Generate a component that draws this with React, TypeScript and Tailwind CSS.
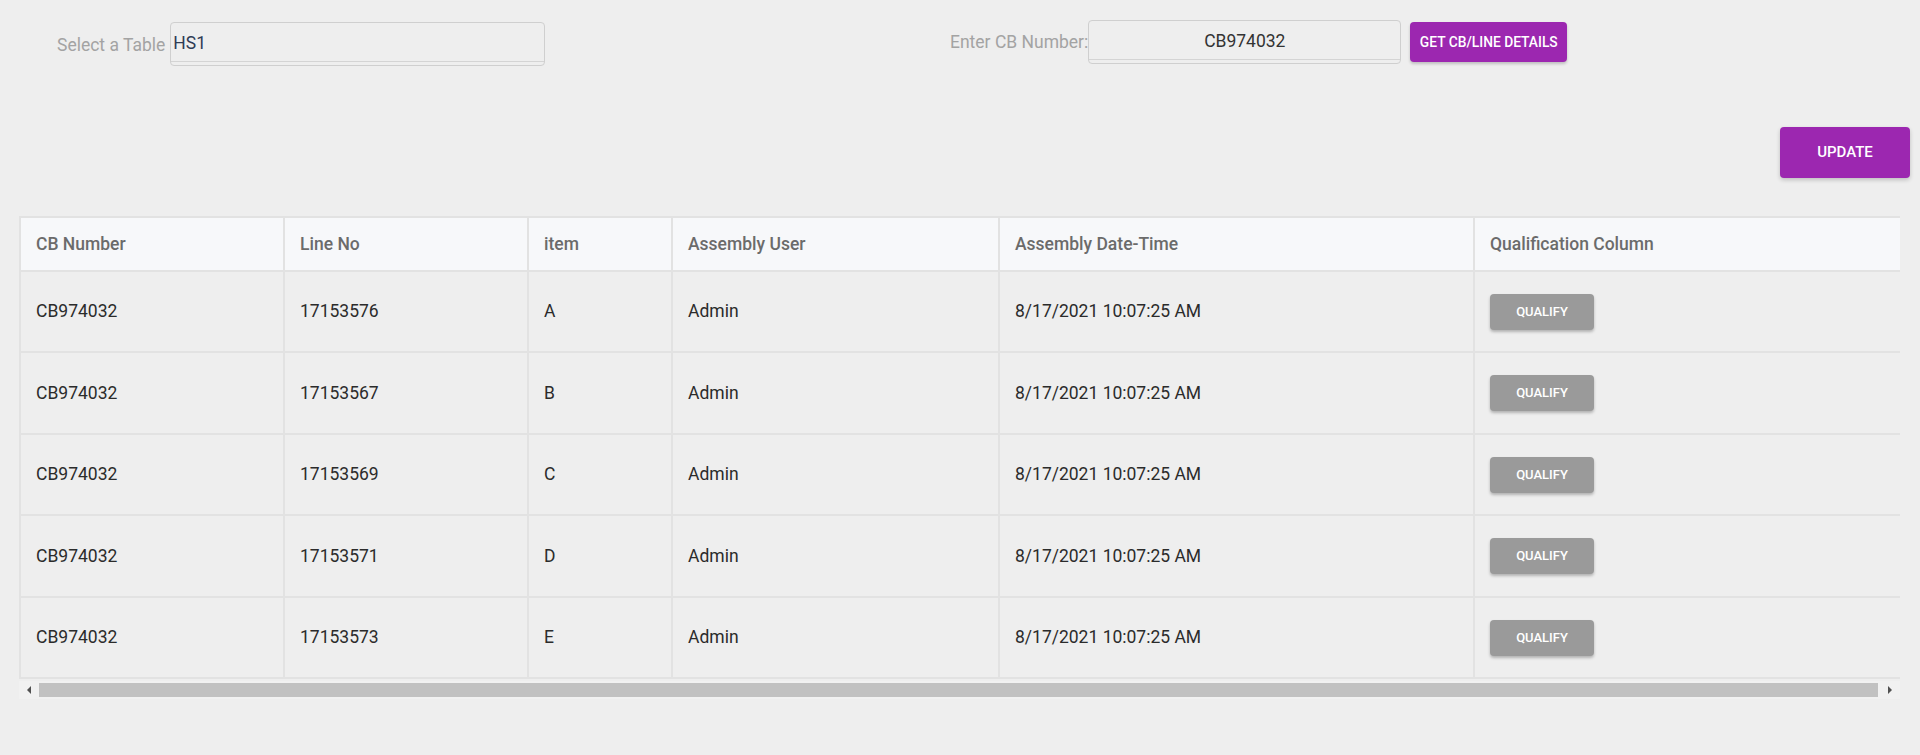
import React from "react";

const rows = [
  { cb: "CB974032", line: "17153576", item: "A", h: "h-[81px]" },
  { cb: "CB974032", line: "17153567", item: "B", h: "h-[82px]" },
  { cb: "CB974032", line: "17153569", item: "C", h: "h-[81px]" },
  { cb: "CB974032", line: "17153571", item: "D", h: "h-[82px]" },
  { cb: "CB974032", line: "17153573", item: "E", h: "h-[81px]" },
];

function Cell({ w, children, last }: { w: string; children: React.ReactNode; last?: boolean }) {
  return (
    <div className={`${w} shrink-0 flex items-center pl-[15px] ${last ? "" : "border-r-2 border-[#e2e2e2]"}`}>
      {children}
    </div>
  );
}

const widths = ["w-[264px]", "w-[244px]", "w-[144px]", "w-[327px]", "w-[475px]", "w-[460px]"];

export default function App() {
  return (
    <div
      className="w-[1920px] h-[755px] bg-[#eeeeee] overflow-hidden"
      style={{ fontFamily: "Roboto, 'Liberation Sans', sans-serif" }}
    >
      {/* top controls */}
      <div className="flex items-start h-[80px]">
        <div className="w-[950px] shrink-0 flex items-start pl-[57px] pt-[22px]">
          <span className="text-[17.5px] text-[#a3a3a3] mr-[5px] h-[44px] flex items-center pt-[2px]">Select a Table</span>
          <div className="w-[375px] h-[44px] border border-[#cfcfcf] rounded-[4px] flex flex-col">
            <div className="flex-1 flex items-center pl-[2px] pt-[3px] text-[17.5px] text-[#2f3b55]">HS1</div>
            <div className="h-px bg-[#d4d4d4] mb-[3px]" />
          </div>
        </div>
        <div className="flex items-start pt-[20px]">
          <span className="text-[17.5px] text-[#a3a3a3] h-[44px] flex items-center">Enter CB Number:</span>
          <div className="w-[313px] h-[44px] border border-[#cfcfcf] rounded-[4px] flex flex-col">
            <div className="flex-1 flex items-center justify-center text-[17.5px] text-[#333] pt-[3px]">CB974032</div>
            <div className="h-px bg-[#d4d4d4] mb-[3px]" />
          </div>
          <button className="ml-[9px] mt-[2px] w-[157px] h-[40px] rounded-[4px] bg-[#9c27b0] text-white text-[13.8px] font-medium uppercase shadow-[0_2px_3px_rgba(0,0,0,0.2)]">
            GET CB/LINE DETAILS
          </button>
        </div>
      </div>

      {/* update */}
      <div className="flex justify-end pr-[10px] mt-[47px]">
        <button className="w-[130px] h-[51px] rounded-[4px] bg-[#9c27b0] text-white text-[15px] font-medium uppercase shadow-[0_2px_4px_rgba(0,0,0,0.2)]">
          UPDATE
        </button>
      </div>

      {/* table */}
      <div className="ml-[19px] mt-[38px] w-[1881px]">
        <div className="overflow-hidden border-l-2 border-t-2 border-[#e2e2e2]">
          <div className="w-[1914px]">
            <div className="flex h-[54px] bg-[#f7f8fa] border-b-2 border-[#e2e2e2] text-[17.5px] font-medium text-[#6b6b6b]">
              <Cell w={widths[0]}>CB Number</Cell>
              <Cell w={widths[1]}>Line No</Cell>
              <Cell w={widths[2]}>item</Cell>
              <Cell w={widths[3]}>Assembly User</Cell>
              <Cell w={widths[4]}>Assembly Date-Time</Cell>
              <Cell w={widths[5]} last>Qualification Column</Cell>
            </div>
            {rows.map((r, i) => (
              <div key={i} className={`flex ${r.h} border-b-2 border-[#e2e2e2] text-[17.5px] text-[#2b2b2b]`}>
                <Cell w={widths[0]}>{r.cb}</Cell>
                <Cell w={widths[1]}>{r.line}</Cell>
                <Cell w={widths[2]}>{r.item}</Cell>
                <Cell w={widths[3]}>Admin</Cell>
                <Cell w={widths[4]}>8/17/2021 10:07:25 AM</Cell>
                <Cell w={widths[5]} last>
                  <button className="w-[104px] h-[36px] rounded-[4px] bg-[#9a9a9a] text-white text-[13px] font-medium uppercase shadow-[0_2px_3px_rgba(0,0,0,0.25)]">
                    QUALIFY
                  </button>
                </Cell>
              </div>
            ))}
          </div>
        </div>
        {/* scrollbar */}
        <div className="flex h-[18px] bg-[#f1f1f1] mt-[2px]">
          <div className="w-[20px] flex items-center justify-center">
            <svg width="5" height="8" viewBox="0 0 5 8"><path d="M4 0 L0 4 L4 8 Z" fill="#505050" /></svg>
          </div>
          <div className="flex-1 bg-[#c1c1c1] my-[2px]" />
          <div className="w-[22px] flex items-center justify-center">
            <svg width="5" height="8" viewBox="0 0 5 8"><path d="M1 0 L5 4 L1 8 Z" fill="#505050" /></svg>
          </div>
        </div>
      </div>
    </div>
  );
}
